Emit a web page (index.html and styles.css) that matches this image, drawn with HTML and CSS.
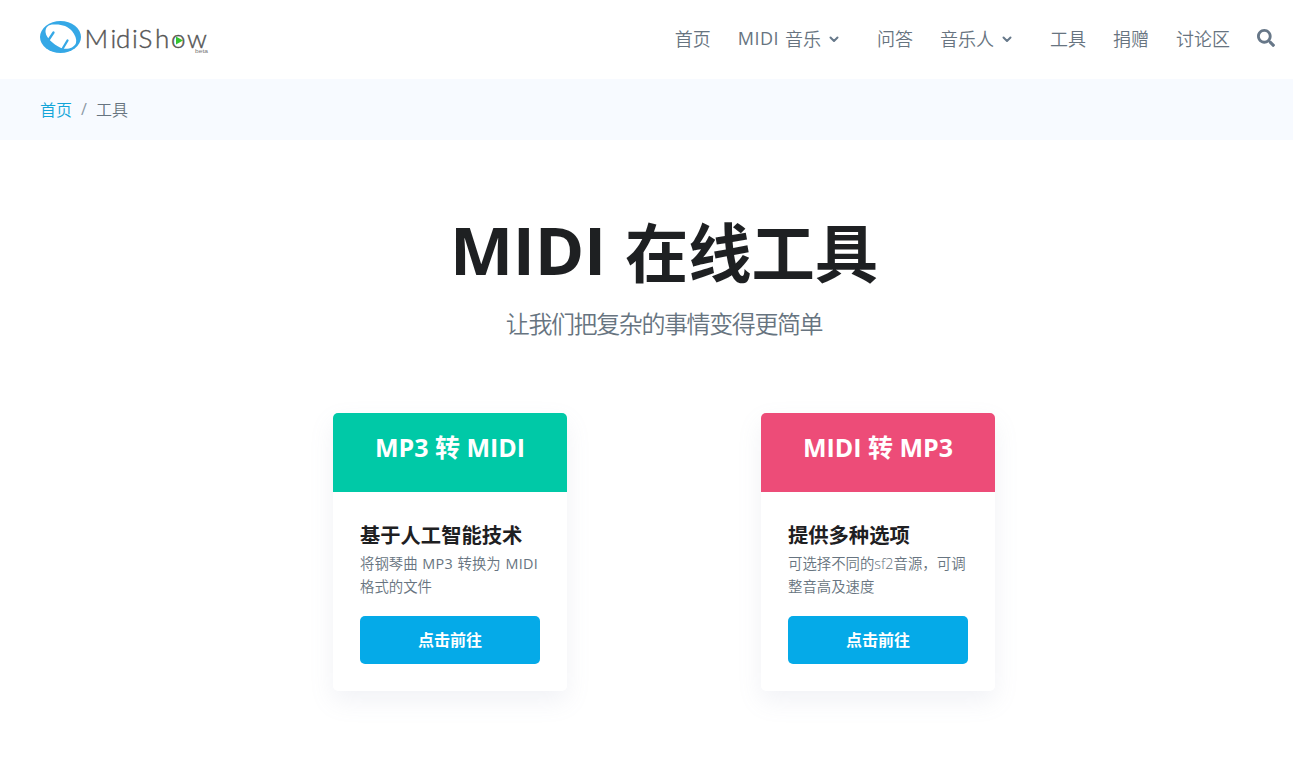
FILE: index.html
```
<!DOCTYPE html>
<html lang="zh-CN">
<head>
    <meta charset="UTF-8">
    <meta name="viewport" content="width=device-width, initial-scale=1.0">
    <title>MIDI 在线工具 - MidiShow</title>
    <link rel="stylesheet" href="styles.css">
</head>
<body>
    <header class="header">
        <a class="logo" href="#">
            <svg width="172" height="40" viewBox="0 0 172 40">
                <ellipse cx="20.5" cy="20" rx="20.5" ry="16" fill="#35a8e6"/>
                <path d="M5.500 15C5.500 10 8 7.500 14 7.500C21 7 28 9 32 14C35 18 37 22 36 26C34 31 28 32.500 23 31.500C17 30 6 22 5.500 15Z" fill="#fff"/>
                <path d="M13.500 15.500L8.500 23M27.500 23.500L23 31" stroke="#35a8e6" stroke-width="2.300" stroke-linecap="round"/>
                <text class="logo-text" x="44.500 70.500 76 92 98.500 115 131 147" y="31">MidiShow</text>
                <path d="M136 19.500L143 23.500L136 27.500Z" fill="#35c52f"/>
                <text class="logo-beta" x="155" y="36" textLength="13" lengthAdjust="spacingAndGlyphs">beta</text>
            </svg>
        </a>
        <nav class="nav">
            <a href="#">首页</a>
            <a class="dropdown" href="#"><span class="latin">MIDI</span>音乐
                <svg class="chevron" width="10" height="7" viewBox="0 0 10 7"><path d="M1.500 1.500L5 5L8.500 1.500"/></svg>
            </a>
            <a href="#">问答</a>
            <a class="dropdown" href="#">音乐人
                <svg class="chevron" width="10" height="7" viewBox="0 0 10 7"><path d="M1.500 1.500L5 5L8.500 1.500"/></svg>
            </a>
            <a href="#">工具</a>
            <a href="#">捐赠</a>
            <a href="#">讨论区</a>
            <a class="search" href="#">
                <svg width="18" height="18" viewBox="0 0 512 512"><path fill="currentColor" d="M505 442.700L405.300 343c-4.500-4.500-10.600-7-17-7H372c27.600-35.300 44-79.700 44-128C416 93.100 322.900 0 208 0S0 93.100 0 208s93.100 208 208 208c48.300 0 92.700-16.400 128-44v16.300c0 6.400 2.500 12.500 7 17l99.700 99.700c9.400 9.400 24.600 9.400 33.900 0l28.300-28.300c9.400-9.400 9.400-24.600.1-34zM208 336c-70.700 0-128-57.200-128-128 0-70.700 57.200-128 128-128 70.700 0 128 57.200 128 128 0 70.700-57.200 128-128 128z"/></svg>
            </a>
        </nav>
    </header>

    <div class="breadcrumb">
        <a href="#">首页</a>
        <span class="divider">/</span>
        <span>工具</span>
    </div>

    <main class="container">
        <h1>MIDI <span>在线工具</span></h1>
        <p class="lead">让我们把复杂的事情变得更简单</p>
        <div class="cards">
            <div class="card">
                <div class="card-header green">MP3 转 MIDI</div>
                <div class="card-body">
                    <h4>基于人工智能技术</h4>
                    <p>将钢琴曲 <span class="latin">MP3</span> 转换为 <span class="latin">MIDI</span><br>格式的文件</p>
                    <a class="btn" href="#">点击前往</a>
                </div>
            </div>
            <div class="card">
                <div class="card-header pink">MIDI 转 MP3</div>
                <div class="card-body">
                    <h4>提供多种选项</h4>
                    <p>可选择不同的sf2音源，可调<br>整音高及速度</p>
                    <a class="btn" href="#">点击前往</a>
                </div>
            </div>
        </div>
    </main>
</body>
</html>
```
FILE: styles.css
```
* {
    box-sizing: border-box;
}
body {
    margin: 0;
    background: #fff;
    color: #677480;
    font-family: "Open Sans", "Noto Sans CJK SC", sans-serif;
    font-weight: 350;
}
a {
    color: inherit;
    text-decoration: none;
}
.latin {
    font-weight: 400;
    letter-spacing: 0.3px;
}
.header {
    display: flex;
    justify-content: space-between;
    height: 79px;
    padding: 0 18px 0 40px;
}
.logo {
    padding-top: 17px;
}
.logo svg {
    display: block;
    overflow: visible;
}
.logo-text {
    font-family: Lato, sans-serif;
    font-size: 26px;
    font-weight: 300;
    fill: #555;
    stroke: #555;
    stroke-width: 0.4;
}
.logo-beta {
    font-family: "Liberation Sans", sans-serif;
    font-size: 6px;
    font-weight: 400;
    fill: #777;
}
.nav {
    display: flex;
    align-items: center;
    gap: 27px;
    height: 75px;
    font-size: 18px;
    color: #677480;
    white-space: nowrap;
}
.dropdown {
    display: flex;
    align-items: center;
    margin-right: 10px;
}
.dropdown .latin {
    margin-right: 6px;
    letter-spacing: 0.5px;
}
.chevron {
    margin: 4px 1px 0 8px;
    fill: none;
    stroke: #66788a;
    stroke-width: 2;
    stroke-linecap: round;
    stroke-linejoin: round;
}
.search svg {
    display: block;
    color: #677788;
}
.breadcrumb {
    display: flex;
    align-items: center;
    gap: 8px;
    height: 61px;
    padding: 0 40px 2px;
    background: #f7faff;
    font-size: 16px;
}
.breadcrumb a {
    color: #12a5d8;
}
.divider {
    color: #8c98a4;
    width: 8px;
    font-weight: 400;
    text-align: center;
}
.container {
    width: 662px;
    margin-left: 333px;
    padding: 66px 0 40px;
    text-align: center;
}
h1 {
    height: 92px;
    margin: 0;
    font-size: 67px;
    line-height: 86px;
    font-weight: 700;
    letter-spacing: -0.3px;
    word-spacing: 2px;
    color: #1e2022;
}
h1 span {
    font-size: 63.3px;
    letter-spacing: 0;
    line-height: 1;
    vertical-align: -2px;
}
.lead {
    margin: 8px 0 0;
    font-size: 24px;
    line-height: 36px;
    letter-spacing: -1.4px;
}
.cards {
    display: flex;
    justify-content: space-between;
    margin-top: 71px;
}
.card {
    width: 234px;
    height: 278px;
    border-radius: 5px;
    background: #fff;
    box-shadow: 0 10px 24px rgba(140, 152, 184, 0.12);
}
.card-header {
    height: 79px;
    padding-top: 16px;
    border-radius: 5px 5px 0 0;
    color: #fff;
    font-size: 25px;
    line-height: 36px;
    font-weight: 700;
}
.green {
    background: #00c9a7;
}
.pink {
    background: #ed4c78;
}
.card-body {
    padding: 28px 27px;
    text-align: left;
}
.card-body h4 {
    margin: 0;
    font-size: 20.3px;
    line-height: 30px;
    font-weight: 700;
    color: #1e2022;
}
.card-body p {
    margin: 2px 0 0;
    font-size: 14.4px;
    line-height: 23px;
    word-spacing: 0.9px;
    white-space: nowrap;
}
.btn {
    display: block;
    height: 48px;
    margin-top: 18px;
    border-radius: 5px;
    background: #05aae8;
    color: #fff;
    font-size: 16px;
    font-weight: 700;
    line-height: 48px;
    text-align: center;
}
```
